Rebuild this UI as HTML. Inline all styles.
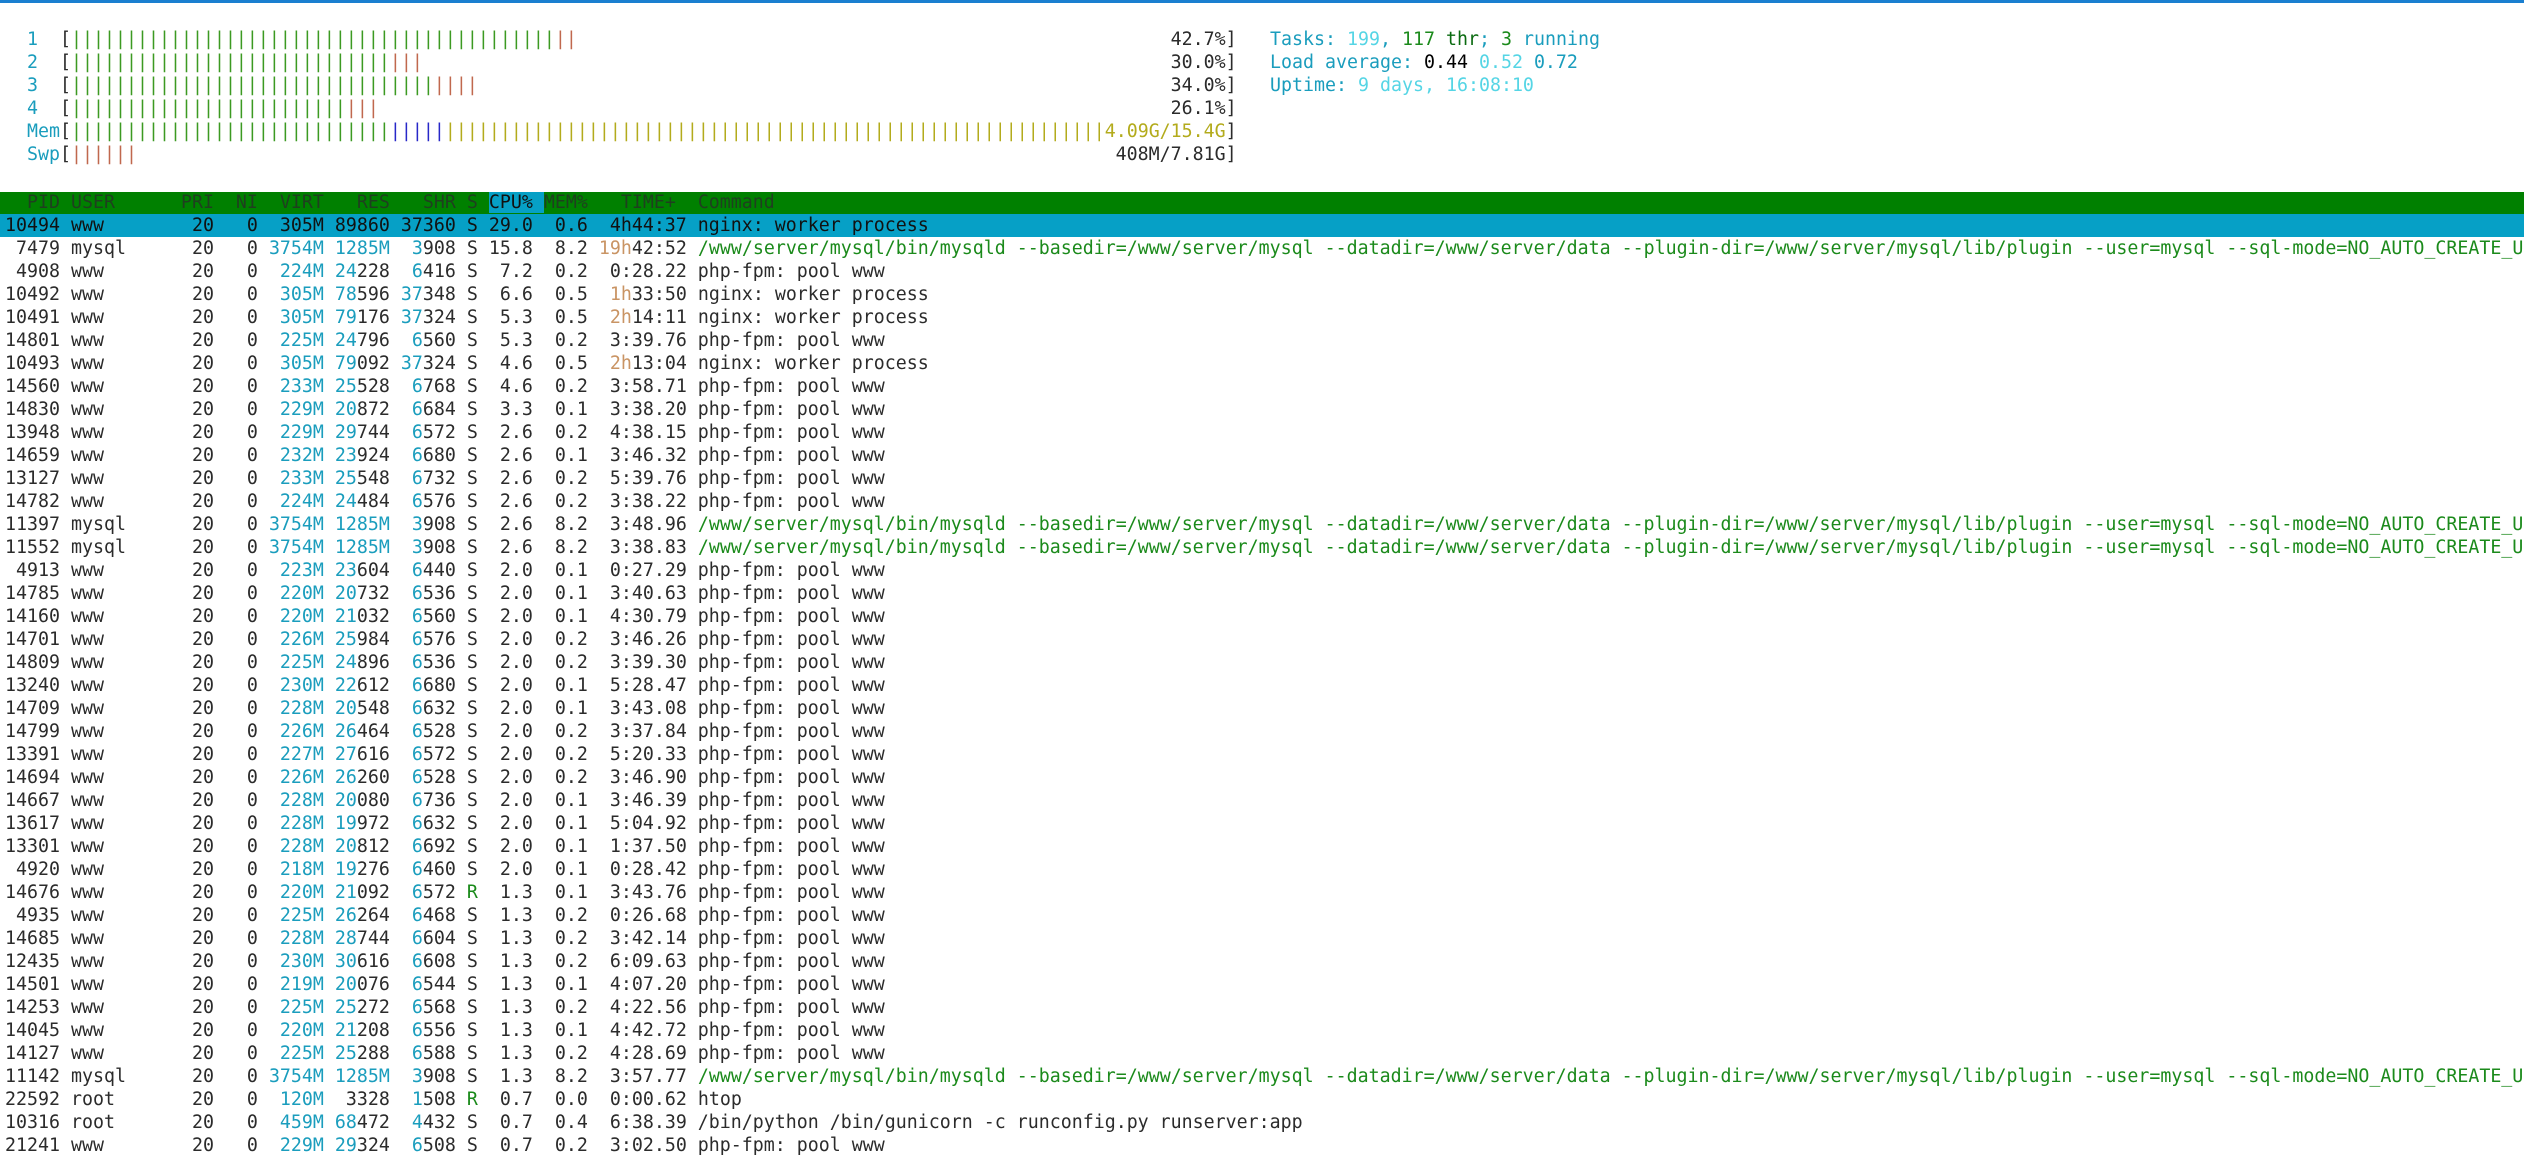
<!DOCTYPE html>
<html><head><meta charset="utf-8"><style>
html,body{margin:0;padding:0;background:#fff;width:2524px;height:1154px;overflow:hidden}
body{font-family:"DejaVu Sans Mono","Liberation Mono",monospace;font-size:18.27px;color:#2b2b2b}
.top{position:absolute;left:0;top:0;width:2524px;height:3px;background:#1a7fd0}
.l{position:absolute;left:5px;height:23px;line-height:23px;white-space:pre}
.m{width:112ch}
.m .rt{position:absolute;right:0;top:0}
.c{color:#1a9dbd}.lc{color:#55d5e5}.o{color:#c99464}.g{color:#1b8a1b}.r{color:#1a8a1a}
.bg{color:#3c9a22}.br{color:#c0684e}.bb{color:#2828c8}.by{color:#b3ab1c}.dk{color:#0a6a10}
.hdr{position:absolute;left:0;top:192px;width:2524px;height:22px;background:#008000}
.sel{position:absolute;left:0;top:214px;width:2524px;height:23px;background:#06a0c6}
.rows{position:absolute;left:0;top:214px;width:2524px;overflow:hidden}
.row{height:23px;line-height:23px;white-space:pre;padding-left:5px;overflow:hidden}
</style></head><body>
<div class="top"></div>
<div class="l m" style="top:28px"><span class="c">  1  </span>[<span class="bg">||||||||||||||||||||||||||||||||||||||||||||</span><span class="br">||</span><span class="rt">42.7%]</span></div>
<div class="l m" style="top:51px"><span class="c">  2  </span>[<span class="bg">|||||||||||||||||||||||||||||</span><span class="br">|||</span><span class="rt">30.0%]</span></div>
<div class="l m" style="top:74px"><span class="c">  3  </span>[<span class="bg">|||||||||||||||||||||||||||||||||</span><span class="br">||||</span><span class="rt">34.0%]</span></div>
<div class="l m" style="top:97px"><span class="c">  4  </span>[<span class="bg">|||||||||||||||||||||||||</span><span class="br">|||</span><span class="rt">26.1%]</span></div>
<div class="l m" style="top:120px"><span class="c">  Mem</span>[<span class="bg">|||||||||||||||||||||||||||||</span><span class="bb">|||||</span><span class="by">||||||||||||||||||||||||||||||||||||||||||||||||||||||||||||4.09G/15.4G</span>]</div>
<div class="l m" style="top:143px"><span class="c">  Swp</span>[<span class="br">||||||</span><span class="rt">408M/7.81G]</span></div>
<div class="l" style="left:1270px;top:28px"><span class="c">Tasks: </span><span class="lc">199</span><span class="c">, </span><span class="g">117</span><span class="dk"> thr</span><span class="c">; </span><span class="g">3</span><span class="c"> running</span></div>
<div class="l" style="left:1270px;top:51px"><span class="c">Load average: </span><span style="color:#000">0.44 </span><span class="lc">0.52 </span><span class="c">0.72</span></div>
<div class="l" style="left:1270px;top:74px"><span class="c">Uptime: </span><span class="lc">9 days, 16:08:10</span></div>
<div class="hdr"></div>
<div class="l" style="top:191px;left:5px;color:#1f3f1f">  PID USER      PRI  NI  VIRT   RES   SHR S <span style="background:#06a0c6;color:#111">CPU% </span>MEM%   TIME+  Command</div>
<div class="sel"></div>
<div class="rows">
<div class="row" style="color:#111">10494 www        20   0  305M 89860 37360 S 29.0  0.6  4h44:37 nginx: worker process</div>
<div class="row"> 7479 mysql      20   0 <span class="c">3754M 1285M</span>  <span class="c">3</span>908 S 15.8  8.2 <span class="o">19h</span>42:52 <span class="g">/www/server/mysql/bin/mysqld --basedir=/www/server/mysql --datadir=/www/server/data --plugin-dir=/www/server/mysql/lib/plugin --user=mysql --sql-mode=NO_AUTO_CREATE_USER</span></div>
<div class="row"> 4908 www        20   0  <span class="c">224M 24</span>228  <span class="c">6</span>416 S  7.2  0.2  0:28.22 php-fpm: pool www</div>
<div class="row">10492 www        20   0  <span class="c">305M 78</span>596 <span class="c">37</span>348 S  6.6  0.5  <span class="o">1h</span>33:50 nginx: worker process</div>
<div class="row">10491 www        20   0  <span class="c">305M 79</span>176 <span class="c">37</span>324 S  5.3  0.5  <span class="o">2h</span>14:11 nginx: worker process</div>
<div class="row">14801 www        20   0  <span class="c">225M 24</span>796  <span class="c">6</span>560 S  5.3  0.2  3:39.76 php-fpm: pool www</div>
<div class="row">10493 www        20   0  <span class="c">305M 79</span>092 <span class="c">37</span>324 S  4.6  0.5  <span class="o">2h</span>13:04 nginx: worker process</div>
<div class="row">14560 www        20   0  <span class="c">233M 25</span>528  <span class="c">6</span>768 S  4.6  0.2  3:58.71 php-fpm: pool www</div>
<div class="row">14830 www        20   0  <span class="c">229M 20</span>872  <span class="c">6</span>684 S  3.3  0.1  3:38.20 php-fpm: pool www</div>
<div class="row">13948 www        20   0  <span class="c">229M 29</span>744  <span class="c">6</span>572 S  2.6  0.2  4:38.15 php-fpm: pool www</div>
<div class="row">14659 www        20   0  <span class="c">232M 23</span>924  <span class="c">6</span>680 S  2.6  0.1  3:46.32 php-fpm: pool www</div>
<div class="row">13127 www        20   0  <span class="c">233M 25</span>548  <span class="c">6</span>732 S  2.6  0.2  5:39.76 php-fpm: pool www</div>
<div class="row">14782 www        20   0  <span class="c">224M 24</span>484  <span class="c">6</span>576 S  2.6  0.2  3:38.22 php-fpm: pool www</div>
<div class="row">11397 mysql      20   0 <span class="c">3754M 1285M</span>  <span class="c">3</span>908 S  2.6  8.2  3:48.96 <span class="g">/www/server/mysql/bin/mysqld --basedir=/www/server/mysql --datadir=/www/server/data --plugin-dir=/www/server/mysql/lib/plugin --user=mysql --sql-mode=NO_AUTO_CREATE_USER</span></div>
<div class="row">11552 mysql      20   0 <span class="c">3754M 1285M</span>  <span class="c">3</span>908 S  2.6  8.2  3:38.83 <span class="g">/www/server/mysql/bin/mysqld --basedir=/www/server/mysql --datadir=/www/server/data --plugin-dir=/www/server/mysql/lib/plugin --user=mysql --sql-mode=NO_AUTO_CREATE_USER</span></div>
<div class="row"> 4913 www        20   0  <span class="c">223M 23</span>604  <span class="c">6</span>440 S  2.0  0.1  0:27.29 php-fpm: pool www</div>
<div class="row">14785 www        20   0  <span class="c">220M 20</span>732  <span class="c">6</span>536 S  2.0  0.1  3:40.63 php-fpm: pool www</div>
<div class="row">14160 www        20   0  <span class="c">220M 21</span>032  <span class="c">6</span>560 S  2.0  0.1  4:30.79 php-fpm: pool www</div>
<div class="row">14701 www        20   0  <span class="c">226M 25</span>984  <span class="c">6</span>576 S  2.0  0.2  3:46.26 php-fpm: pool www</div>
<div class="row">14809 www        20   0  <span class="c">225M 24</span>896  <span class="c">6</span>536 S  2.0  0.2  3:39.30 php-fpm: pool www</div>
<div class="row">13240 www        20   0  <span class="c">230M 22</span>612  <span class="c">6</span>680 S  2.0  0.1  5:28.47 php-fpm: pool www</div>
<div class="row">14709 www        20   0  <span class="c">228M 20</span>548  <span class="c">6</span>632 S  2.0  0.1  3:43.08 php-fpm: pool www</div>
<div class="row">14799 www        20   0  <span class="c">226M 26</span>464  <span class="c">6</span>528 S  2.0  0.2  3:37.84 php-fpm: pool www</div>
<div class="row">13391 www        20   0  <span class="c">227M 27</span>616  <span class="c">6</span>572 S  2.0  0.2  5:20.33 php-fpm: pool www</div>
<div class="row">14694 www        20   0  <span class="c">226M 26</span>260  <span class="c">6</span>528 S  2.0  0.2  3:46.90 php-fpm: pool www</div>
<div class="row">14667 www        20   0  <span class="c">228M 20</span>080  <span class="c">6</span>736 S  2.0  0.1  3:46.39 php-fpm: pool www</div>
<div class="row">13617 www        20   0  <span class="c">228M 19</span>972  <span class="c">6</span>632 S  2.0  0.1  5:04.92 php-fpm: pool www</div>
<div class="row">13301 www        20   0  <span class="c">228M 20</span>812  <span class="c">6</span>692 S  2.0  0.1  1:37.50 php-fpm: pool www</div>
<div class="row"> 4920 www        20   0  <span class="c">218M 19</span>276  <span class="c">6</span>460 S  2.0  0.1  0:28.42 php-fpm: pool www</div>
<div class="row">14676 www        20   0  <span class="c">220M 21</span>092  <span class="c">6</span>572 <span class="r">R</span>  1.3  0.1  3:43.76 php-fpm: pool www</div>
<div class="row"> 4935 www        20   0  <span class="c">225M 26</span>264  <span class="c">6</span>468 S  1.3  0.2  0:26.68 php-fpm: pool www</div>
<div class="row">14685 www        20   0  <span class="c">228M 28</span>744  <span class="c">6</span>604 S  1.3  0.2  3:42.14 php-fpm: pool www</div>
<div class="row">12435 www        20   0  <span class="c">230M 30</span>616  <span class="c">6</span>608 S  1.3  0.2  6:09.63 php-fpm: pool www</div>
<div class="row">14501 www        20   0  <span class="c">219M 20</span>076  <span class="c">6</span>544 S  1.3  0.1  4:07.20 php-fpm: pool www</div>
<div class="row">14253 www        20   0  <span class="c">225M 25</span>272  <span class="c">6</span>568 S  1.3  0.2  4:22.56 php-fpm: pool www</div>
<div class="row">14045 www        20   0  <span class="c">220M 21</span>208  <span class="c">6</span>556 S  1.3  0.1  4:42.72 php-fpm: pool www</div>
<div class="row">14127 www        20   0  <span class="c">225M 25</span>288  <span class="c">6</span>588 S  1.3  0.2  4:28.69 php-fpm: pool www</div>
<div class="row">11142 mysql      20   0 <span class="c">3754M 1285M</span>  <span class="c">3</span>908 S  1.3  8.2  3:57.77 <span class="g">/www/server/mysql/bin/mysqld --basedir=/www/server/mysql --datadir=/www/server/data --plugin-dir=/www/server/mysql/lib/plugin --user=mysql --sql-mode=NO_AUTO_CREATE_USER</span></div>
<div class="row">22592 root       20   0  <span class="c">120M</span>  3328  <span class="c">1</span>508 <span class="r">R</span>  0.7  0.0  0:00.62 htop</div>
<div class="row">10316 root       20   0  <span class="c">459M 68</span>472  <span class="c">4</span>432 S  0.7  0.4  6:38.39 /bin/python /bin/gunicorn -c runconfig.py runserver:app</div>
<div class="row">21241 www        20   0  <span class="c">229M 29</span>324  <span class="c">6</span>508 S  0.7  0.2  3:02.50 php-fpm: pool www</div>
</div>
</body></html>
